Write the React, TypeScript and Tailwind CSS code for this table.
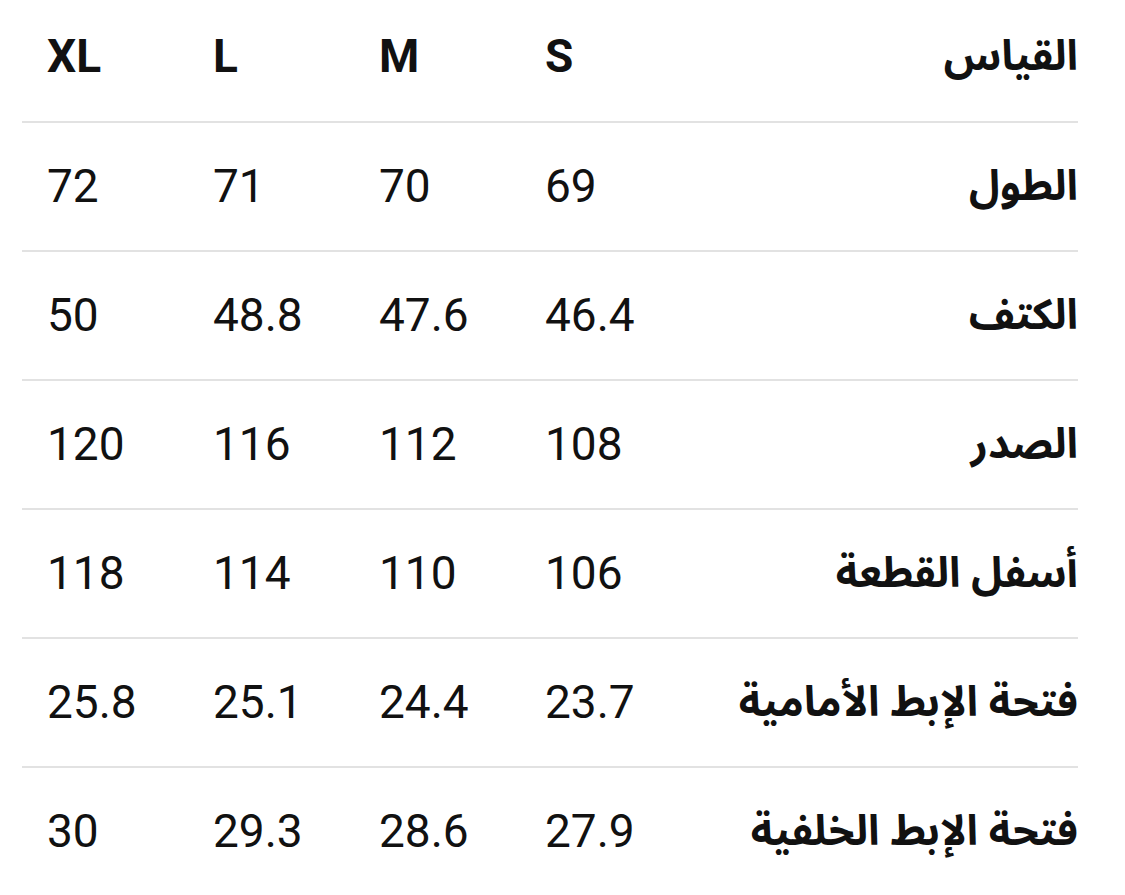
const sizes = ["S", "M", "L", "XL"];

const rows: { label: string; values: string[] }[] = [
  { label: "الطول", values: ["69", "70", "71", "72"] },
  { label: "الكتف", values: ["46.4", "47.6", "48.8", "50"] },
  { label: "الصدر", values: ["108", "112", "116", "120"] },
  { label: "أسفل القطعة", values: ["106", "110", "114", "118"] },
  { label: "فتحة الإبط الأمامية", values: ["23.7", "24.4", "25.1", "25.8"] },
  { label: "فتحة الإبط الخلفية", values: ["27.9", "28.6", "29.3", "30"] },
];

const arabic = { fontFamily: "'Noto Sans Arabic', 'DejaVu Sans', sans-serif" };

export default function App() {
  return (
    <div
      dir="rtl"
      className="min-h-screen w-[1125px] bg-white pl-[22px] pr-[47px] text-[#111111]"
      style={{ fontFamily: "Roboto, 'DejaVu Sans', sans-serif" }}
    >
      {/* Header row */}
      <div className="grid h-[121px] grid-cols-[1fr_166px_166px_166px_166px] items-center pb-[8px]">
        <div className="whitespace-nowrap text-right text-[42px] font-bold" style={arabic}>
          القياس
        </div>
        {sizes.map((s) => (
          <div key={s} className="pl-[25px] text-left text-[46px] font-bold" dir="ltr">
            {s}
          </div>
        ))}
      </div>

      {/* Body rows */}
      {rows.map((r) => (
        <div
          key={r.label}
          className="grid h-[129px] grid-cols-[1fr_166px_166px_166px_166px] items-center border-t-2 border-[#e2e2e2]"
        >
          <div className="whitespace-nowrap text-right text-[42px] font-bold" style={arabic}>
            {r.label}
          </div>
          {r.values.map((v, i) => (
            <div key={i} className="pl-[25px] text-left text-[46px]" dir="ltr">
              {v}
            </div>
          ))}
        </div>
      ))}
    </div>
  );
}
